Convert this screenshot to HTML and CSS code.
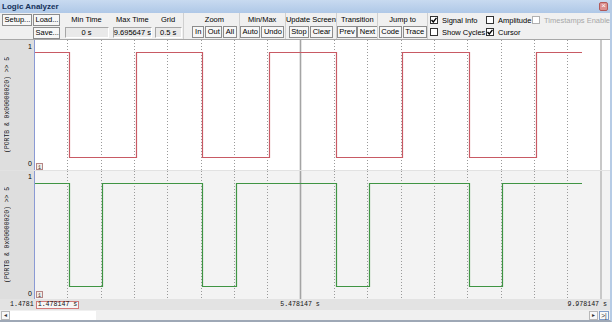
FILE: index.html
```html
<!DOCTYPE html>
<html lang="en">
  <head>
    <meta charset="UTF-8" />
    <title>Logic Analyzer</title>
    <link rel="stylesheet" href="styles.css">
  </head>
  <body>
    <div class="window">
      <div class="titlebar">
        <span class="title">Logic Analyzer</span>
        <span class="close">&times;</span>
      </div>

      <div class="toolbar">
        <div class="setup">
          <button class="btn setup-btn">Setup...</button>
          <button class="btn">Load...</button>
          <button class="btn save-btn">Save...</button>
        </div>
        <div class="group min-time"><span class="cap">Min Time</span><span class="val">0 s</span></div>
        <div class="group max-time"><span class="cap">Max Time</span><span class="val">9.695647 s</span></div>
        <div class="group grid-size"><span class="cap">Grid</span><span class="val">0.5 s</span></div>
        <div class="group zoom sep">
          <span class="cap">Zoom</span>
          <div class="btns"><button class="btn">In</button><button class="btn">Out</button><button class="btn">All</button></div>
        </div>
        <div class="group minmax sep">
          <span class="cap">Min/Max</span>
          <div class="btns"><button class="btn">Auto</button><button class="btn">Undo</button></div>
        </div>
        <div class="group update sep">
          <span class="cap">Update Screen</span>
          <div class="btns"><button class="btn">Stop</button><button class="btn">Clear</button></div>
        </div>
        <div class="group transition sep">
          <span class="cap">Transition</span>
          <div class="btns tight"><button class="btn">Prev</button><button class="btn">Next</button></div>
        </div>
        <div class="group jump sep">
          <span class="cap">Jump to</span>
          <div class="btns"><button class="btn">Code</button><button class="btn">Trace</button></div>
        </div>
        <div class="checks sep">
          <label class="check"><span class="box"><svg width="6" height="6" viewBox="0 0 6 6"><polyline points="0.5,3 2.3,5 5.5,0.8" /></svg></span>Signal Info</label>
          <label class="check"><span class="box"></span>Amplitude</label>
          <label class="check off"><span class="box"></span>Timestamps Enable</label>
          <label class="check"><span class="box"></span>Show Cycles</label>
          <label class="check"><span class="box"><svg width="6" height="6" viewBox="0 0 6 6"><polyline points="0.5,3 2.3,5 5.5,0.8" /></svg></span>Cursor</label>
        </div>
      </div>

      <div class="plots">
        <div class="track">
          <div class="axis">
            <span class="sig">(PORTB &amp; 0x00000020) &gt;&gt; 5</span>
            <div class="ticks"><span>1</span><span>0</span></div>
          </div>
          <svg class="wave" width="565" height="130" viewBox="0 0 565 130">
            <g class="grid">
              <line x1="32.5" y1="0" x2="32.5" y2="130" /><line x1="66.5" y1="0" x2="66.5" y2="130" />
              <line x1="99.5" y1="0" x2="99.5" y2="130" /><line x1="132.5" y1="0" x2="132.5" y2="130" />
              <line x1="166.5" y1="0" x2="166.5" y2="130" /><line x1="199.5" y1="0" x2="199.5" y2="130" />
              <line x1="232.5" y1="0" x2="232.5" y2="130" /><line x1="299.5" y1="0" x2="299.5" y2="130" />
              <line x1="332.5" y1="0" x2="332.5" y2="130" /><line x1="366.5" y1="0" x2="366.5" y2="130" />
              <line x1="399.5" y1="0" x2="399.5" y2="130" /><line x1="432.5" y1="0" x2="432.5" y2="130" />
              <line x1="466.5" y1="0" x2="466.5" y2="130" /><line x1="499.5" y1="0" x2="499.5" y2="130" />
              <line x1="532.5" y1="0" x2="532.5" y2="130" />
            </g>
            <line class="cursor" x1="265.5" y1="0" x2="265.5" y2="130" />
            <polyline class="sig-red" points="0,12.5 34.5,12.5 34.5,117.5 101.5,117.5 101.5,12.5 167.5,12.5 167.5,117.5 234.5,117.5 234.5,12.5 301.5,12.5 301.5,117.5 367.5,117.5 367.5,12.5 434.5,12.5 434.5,117.5 501.5,117.5 501.5,12.5 547,12.5" />
            <rect class="marker" x="1.5" y="123.5" width="6" height="6" />
            <text class="marker-text" x="4.5" y="128.7">1</text>
          </svg>
          <div class="gutter"></div>
        </div>

        <div class="track alt">
          <div class="axis">
            <span class="sig">(PORTB &amp; 0x00000020) &gt;&gt; 5</span>
            <div class="ticks"><span>1</span><span>0</span></div>
          </div>
          <svg class="wave" width="565" height="128" viewBox="0 0 565 128">
            <g class="grid">
              <line x1="32.5" y1="0" x2="32.5" y2="128" /><line x1="66.5" y1="0" x2="66.5" y2="128" />
              <line x1="99.5" y1="0" x2="99.5" y2="128" /><line x1="132.5" y1="0" x2="132.5" y2="128" />
              <line x1="166.5" y1="0" x2="166.5" y2="128" /><line x1="199.5" y1="0" x2="199.5" y2="128" />
              <line x1="232.5" y1="0" x2="232.5" y2="128" /><line x1="299.5" y1="0" x2="299.5" y2="128" />
              <line x1="332.5" y1="0" x2="332.5" y2="128" /><line x1="366.5" y1="0" x2="366.5" y2="128" />
              <line x1="399.5" y1="0" x2="399.5" y2="128" /><line x1="432.5" y1="0" x2="432.5" y2="128" />
              <line x1="466.5" y1="0" x2="466.5" y2="128" /><line x1="499.5" y1="0" x2="499.5" y2="128" />
              <line x1="532.5" y1="0" x2="532.5" y2="128" />
            </g>
            <line class="cursor" x1="265.5" y1="0" x2="265.5" y2="128" />
            <polyline class="sig-green" points="0,12.5 34.5,12.5 34.5,115.5 67.5,115.5 67.5,12.5 167.5,12.5 167.5,115.5 201.5,115.5 201.5,12.5 301.5,12.5 301.5,115.5 334.5,115.5 334.5,12.5 434.5,12.5 434.5,115.5 467.5,115.5 467.5,12.5 547,12.5" />
            <rect class="marker" x="1.5" y="120.5" width="6" height="6" />
            <text class="marker-text" x="4.5" y="125.7">1</text>
          </svg>
          <div class="gutter"></div>
        </div>
      </div>

      <div class="timeline">
        <span class="t-left">1.4781</span>
        <span class="t-cursor">1.478147 s</span>
        <span class="t-mid">5.478147 s</span>
        <span class="t-end">9.978147 s</span>
      </div>

      <div class="hscroll">
        <span class="arrow">&#9666;</span>
        <span class="thumb"></span>
        <span class="rest"></span>
        <span class="arrow">&#9656;</span>
        <span class="arrow end">&gt;|</span>
      </div>
    </div>
  </body>
</html>
```

FILE: styles.css
```css
body {
  margin: 0;
  font-family: "Liberation Sans", Arial, sans-serif;
  font-size: 7.5px;
  color: #000;
  background-color: #f0f0f0;
}
.window {
  width: 612px;
  height: 322px;
  box-sizing: border-box;
  border-right: 2px solid #b6cbe5;
  border-bottom: 2px solid #9ea8b6;
  display: flex;
  flex-direction: column;
  overflow: hidden;
  background-color: #f0f0f0;
}

/* title */
.titlebar {
  height: 13px;
  flex: none;
  display: flex;
  align-items: center;
  justify-content: space-between;
  padding: 0 2px 0 2px;
  background: linear-gradient(#c8daf0, #afc8e7);
}
.title {
  font-weight: bold;
  font-size: 8px;
  color: #15315a;
}
.close {
  width: 9px;
  height: 9px;
  box-sizing: border-box;
  border: 1px solid #b25a5a;
  border-radius: 2px;
  background-color: #dc9090;
  color: #fff;
  font-size: 8px;
  line-height: 6px;
  text-align: center;
}

/* toolbar */
.toolbar {
  height: 27px;
  flex: none;
  box-sizing: border-box;
  border-bottom: 1px solid #a8a8a8;
  display: flex;
}
.btn {
  font-family: "Liberation Sans", Arial, sans-serif;
  font-size: 7.5px;
  height: 12px;
  min-width: 12px;
  padding: 0 1.5px;
  margin: 0;
  line-height: 10px;
  box-sizing: border-box;
  border: 1px solid #8c8c8c;
  border-radius: 0;
  background-color: #f7f7f7;
  color: #000;
}
.setup {
  width: 62px;
  box-sizing: border-box;
  padding: 1px 0 0 2px;
  display: grid;
  grid-template-columns: 30px 27px;
  grid-template-rows: 12px 12px;
  column-gap: 1px;
  row-gap: 1px;
}
.save-btn {
  grid-column: 2;
}
.group {
  display: flex;
  flex-direction: column;
  align-items: center;
  box-sizing: border-box;
}
.sep {
  border-left: 1px solid #d0d0d0;
}
.cap {
  height: 13px;
  line-height: 14px;
  white-space: nowrap;
}
.val {
  height: 11px;
  margin-top: 1px;
  box-sizing: border-box;
  border: 1px solid;
  border-color: #a6a6a6 #ffffff #ffffff #a6a6a6;
  background-color: #e9e9e9;
  line-height: 9px;
  text-align: center;
  white-space: nowrap;
}
.min-time { width: 50px; }
.min-time .val { width: 44px; }
.max-time { width: 42px; }
.max-time .val { width: 39px; }
.grid-size { width: 30px; }
.grid-size .val { width: 27px; }
.zoom { width: 56px; padding-left: 6px; }
.minmax { width: 46px; }
.update { width: 52px; }
.transition { width: 41px; }
.jump { width: 50px; }
.btns {
  display: flex;
  gap: 1px;
}
.btns.tight {
  gap: 0;
}
.checks {
  flex: 1;
  padding: 1px 0 0 2px;
  display: grid;
  grid-template-columns: 56px 46px 1fr;
  grid-template-rows: 12px 12px;
  align-items: center;
}
.check {
  display: flex;
  align-items: center;
  gap: 4px;
  white-space: nowrap;
}
.box {
  width: 8px;
  height: 8px;
  box-sizing: border-box;
  border: 1px solid #333;
  background-color: #fff;
  display: flex;
  align-items: center;
  justify-content: center;
}
.box polyline {
  fill: none;
  stroke: #000;
  stroke-width: 1.4;
}
.check.off {
  color: #a8a8a8;
}
.check.off .box {
  border-color: #b0b0b0;
}

/* plots */
.plots {
  display: flex;
  flex-direction: column;
}
.track {
  height: 130px;
  display: flex;
  background-color: #fff;
  border-bottom: 1px solid #e2e2e2;
}
.track.alt {
  height: 128px;
  border-bottom: none;
  background-color: #f3f3f3;
}
.axis {
  width: 35px;
  flex: none;
  box-sizing: border-box;
  border-right: 1px solid #8a9ad4;
  background-color: #dedede;
  display: flex;
  justify-content: space-between;
  padding: 0 2px 0 4px;
}
.sig {
  writing-mode: vertical-rl;
  transform: rotate(180deg);
  align-self: center;
  font-family: "Liberation Mono", monospace;
  font-size: 6.4px;
  color: #222;
  white-space: nowrap;
}
.ticks {
  display: flex;
  flex-direction: column;
  justify-content: space-between;
  padding: 3px 0 3px;
  font-size: 7px;
}
.track.alt .ticks {
  padding: 2px 0 2px;
}
.wave {
  display: block;
  flex: none;
}
.grid line {
  stroke: #9a9a9a;
  stroke-width: 1;
  stroke-dasharray: 1 2;
}
.cursor {
  stroke: #a4a4a4;
  stroke-width: 1.6;
}
.sig-red {
  fill: none;
  stroke: #c85a64;
  stroke-width: 1.2;
}
.sig-green {
  fill: none;
  stroke: #3f9443;
  stroke-width: 1.2;
}
.marker {
  fill: #f3ece6;
  stroke: #b48686;
  stroke-width: 1;
}
.marker-text {
  font-family: "Liberation Mono", monospace;
  font-size: 5px;
  text-anchor: middle;
  fill: #333;
}
.gutter {
  flex: 1;
  border-left: 2px solid #c8c8c8;
}

/* time axis */
.timeline {
  height: 11px;
  flex: none;
  display: flex;
  align-items: center;
  background-color: #e3e3e3;
  font-family: "Liberation Mono", monospace;
  font-size: 6.6px;
  color: #111;
  white-space: nowrap;
}
.t-left {
  width: 35px;
  box-sizing: border-box;
  padding-left: 10px;
}
.t-cursor {
  width: 43px;
  height: 8px;
  margin-left: 1px;
  box-sizing: border-box;
  border: 1px solid #d27a7a;
  background-color: #f6f6f6;
  line-height: 6px;
  text-align: center;
}
.t-mid {
  width: 40px;
  margin-left: 201px;
  text-align: center;
}
.t-end {
  margin-left: auto;
  padding-right: 3px;
}

/* scrollbar */
.hscroll {
  flex: 1;
  display: flex;
  align-items: center;
  padding: 0 1px;
  background-color: #f0f0f0;
}
.arrow {
  width: 9px;
  height: 9px;
  box-sizing: border-box;
  border: 1px solid #b8b8b8;
  background-color: #f8f8f8;
  font-size: 6px;
  line-height: 7px;
  text-align: center;
  color: #333;
}
.arrow.end {
  width: 10px;
  margin-left: 1px;
  border-color: #7f9cc8;
  font-size: 6.5px;
}
.thumb {
  width: 86px;
  height: 9px;
  background-color: #fff;
}
.rest {
  flex: 1;
}
```
